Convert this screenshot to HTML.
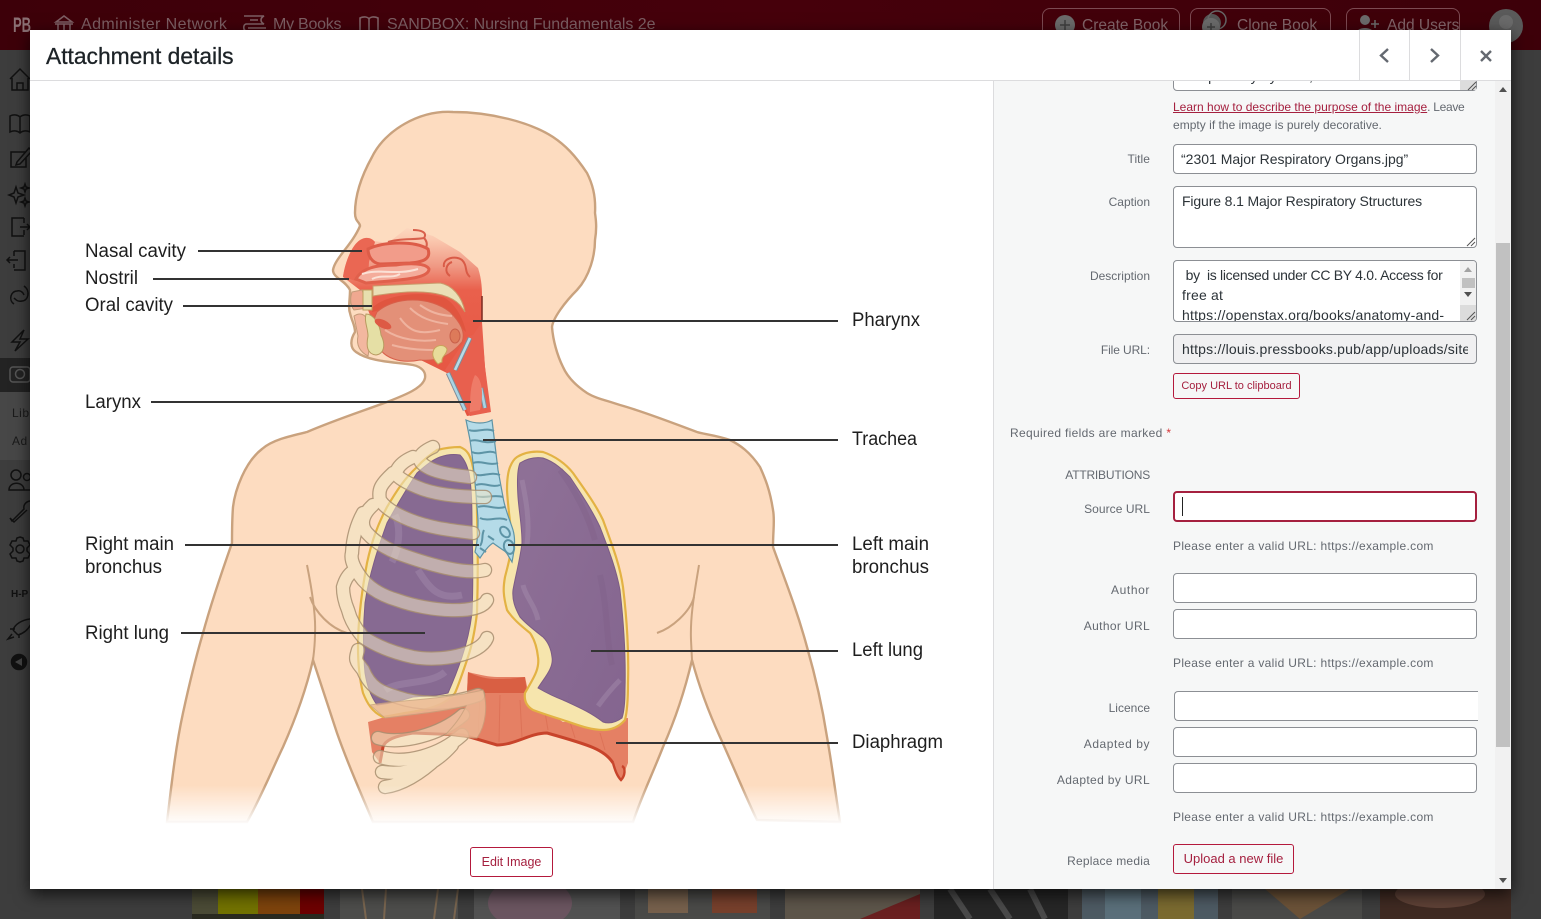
<!DOCTYPE html>
<html lang="en"><head><meta charset="utf-8"><title>Attachment details</title>
<style>
html,body{margin:0;padding:0;width:1541px;height:919px;overflow:hidden;background:#3f3f3f;font-family:"Liberation Sans",Arial,sans-serif}
*{box-sizing:border-box}
.a{position:absolute}
.t{position:absolute;white-space:nowrap;line-height:18px}
.lab{right:391px;text-align:right;font-size:12px;color:#646970;letter-spacing:.15px}
.inp{position:absolute;left:1173px;width:304px;background:#fff;border:1px solid #8c8f94;border-radius:4px;height:30px}
.val{font-size:14px;color:#2c3338;left:1181px}
.hint{font-size:12px;color:#646970;left:1173px;letter-spacing:.31px}
.btn{position:absolute;background:#f6f7f7;border:1px solid #b4193c;border-radius:3px;color:#a5203f;text-align:center;white-space:nowrap}
.hb{position:absolute;top:8px;height:42px;border:1px solid #7c4a52;border-radius:8px;color:#83656a;font-size:15.5px;line-height:33px;white-space:nowrap}
.nav{position:absolute;top:16px;color:#7d5f64;font-size:16px;white-space:nowrap}
</style></head><body>

<!-- dimmed page behind -->
<div class="a" style="left:0;top:0;width:1541px;height:50px;background:linear-gradient(90deg,#3d0009,#46000b 50%,#3d0009)"></div>
<div class="a" style="left:0;top:50px;width:1541px;height:869px;background:#3d3d3d"></div>
<div class="a" style="left:0;top:358px;width:30px;height:34px;background:#232323"></div>
<div class="a" style="left:0;top:392px;width:30px;height:68px;background:#474747"></div>
<div class="t" style="left:13px;top:16px;color:#8b7074;font:bold 21px/20px 'Liberation Sans',sans-serif;transform:scaleX(.62);transform-origin:left">PB</div>
<div class="nav" style="left:81px;letter-spacing:.42px">Administer Network</div>
<div class="nav" style="left:273px;letter-spacing:-.25px">My Books</div>
<div class="nav" style="left:387px;letter-spacing:-.06px">SANDBOX: Nursing Fundamentals 2e</div>
<svg class="a" style="left:0;top:0" width="700" height="30" fill="none" stroke="#7d5f64" stroke-width="1.6">
<path d="M55 24H73M56 22L64 16L72 22ZM58 24V30M64 24V30M70 24V30"/>
<path d="M244 16H264C260 18 260 22 264 24H246C243 25 243 30 246 31M250 20H258M266 28H248"/>
<path d="M360 30V18C364 16 368 17 369 19C370 17 374 16 378 18V30M369 19V30"/>
</svg>
<div class="hb" style="left:1042px;width:138px;padding-left:39px">Create Book</div>
<div class="hb" style="left:1190px;width:141px;padding-left:46px">Clone Book</div>
<div class="hb" style="left:1346px;width:114px;padding-left:40px">Add Users</div>
<svg class="a" style="left:1040px;top:0" width="501" height="50">
<circle cx="25" cy="25" r="10" fill="#6b6b6b"/><path d="M25 20V30M20 25H30" stroke="#3f3f3f" stroke-width="1.5"/>
<circle cx="172" cy="23" r="9" fill="#555"/><circle cx="177" cy="20" r="9" fill="none" stroke="#666" stroke-width="1.5"/><circle cx="171" cy="27" r="9" fill="#6b6b6b"/>
<path d="M171 23V31M167 27H175" stroke="#3f3f3f" stroke-width="1.5"/>
<circle cx="325" cy="20" r="5" fill="#6b6b6b"/><path d="M316 34C316 26 334 26 334 34Z" fill="#6b6b6b"/><path d="M335 20V28M331 24H339" stroke="#6b6b6b" stroke-width="1.5"/>
<circle cx="466" cy="26" r="17" fill="#5a5a5a"/><circle cx="466" cy="22" r="7" fill="#6a6a6a"/>
</svg>
<svg class="a" style="left:0;top:60px" width="30" height="620" fill="none" stroke="#111" stroke-width="1.5">
<path d="M10 19L20 9L30 19M12 18V30H28V18M17 30V23H23V30"/>
<path d="M10 56C14 54 18 55 20 57C22 55 26 54 30 56V72C26 70 22 71 20 73C18 71 14 70 10 72ZM20 57V73"/>
<path d="M26 92H11V107H26V98M17 102L29 88L32 91L20 104L16 105Z"/>
<path d="M16 127L18 133L24 135L18 137L16 143L14 137L9 135L14 133ZM25 124L26 127L29 128L26 129L25 132L24 129L21 128L24 127ZM25 138L26 141L29 142L26 143L25 146L24 143L21 142L24 141Z"/>
<path d="M24 158H12V176H24M20 167H30M27 164L30 167L27 170M24 163V158M24 175V170"/>
<path d="M14 191H25V210H14M7 200H18M10 197L7 200L10 203M14 196V191M14 208V204"/>
<path d="M14 244C8 240 11 231 17 231C20 230 23 232 24 235M24 226C31 231 28 241 22 241C18 242 16 240 14 238"/>
<path d="M24 270L12 282H20L15 291L28 279H20Z"/>
<rect x="10" y="307" width="20" height="15" rx="3" stroke="#555"/><circle cx="20" cy="314" r="4.5" stroke="#555"/>
<circle cx="16" cy="415" r="5"/><circle cx="27" cy="417" r="3.5"/><path d="M9 430C9 421 24 421 24 430ZM24 430H30"/>
<path d="M10 458L12 461L24 449C23 444 27 441 31 441M10 458L14 462L27 450"/>
<path d="M20 477l3 1 1 3 4 0 2 4-3 3 0 3 3 3-2 4-4 0-1 3-3 1-3-1-1-3-4 0-2-4 3-3 0-3-3-3 2-4 4 0 1-3Z"/><circle cx="20" cy="489" r="4"/>
<path d="M13 570C15 564 22 560 30 559M13 570L18 575M18 575C25 573 29 568 31 564M12 574L8 579L14 577M15 569L10 569M19 574L19 578"/>
<circle cx="19" cy="602" r="7.5" fill="#111"/><path d="M22 598L15 602L22 606Z" fill="#444" stroke="none"/>
</svg>
<div class="t" style="left:12px;top:404px;font-size:12px;color:#1a1a1a;letter-spacing:.5px">Lib</div>
<div class="t" style="left:12px;top:432px;font-size:12px;color:#1a1a1a;letter-spacing:.5px">Ad</div>
<div class="t" style="left:11px;top:586px;font-size:10px;font-weight:bold;color:#111">H-P</div>

<!-- thumbnails -->
<svg class="a" style="left:0;top:889px" width="1541" height="30">
<rect x="192" width="26" height="30" fill="#4b4b36"/><rect x="218" width="40" height="30" fill="#727200"/><rect x="258" width="42" height="30" fill="#7d430c"/><rect x="300" width="24" height="30" fill="#6d0000"/>
<rect x="192" y="25" width="132" height="5" fill="#2a2a20"/>
<rect x="340" width="118" height="30" fill="#4d4d4b"/><path d="M362 0L366 30M386 0L384 30M438 0L434 30M458 0L454 30" stroke="#7a6650" stroke-width="2"/>
<rect x="474" width="146" height="30" fill="#525252"/><ellipse cx="530" cy="14" rx="42" ry="26" fill="#6b5560"/>
<rect x="635" width="135" height="30" fill="#4a4a48"/><rect x="648" width="40" height="24" fill="#76604c"/><rect x="712" width="45" height="24" fill="#77402c"/>
<rect x="785" width="135" height="30" fill="#5d554a"/><path d="M860 30L920 5V30Z" fill="#6a2020"/>
<rect x="934" width="134" height="30" fill="#262626"/><path d="M950 0L970 30M990 0L1010 30M1030 0L1045 30" stroke="#4a4a4a" stroke-width="6"/>
<rect x="1082" width="136" height="30" fill="#4d5a63"/><rect x="1105" width="36" height="30" fill="#5a6f7a"/><rect x="1158" width="36" height="30" fill="#7a6a30"/>
<rect x="1232" width="130" height="30" fill="#4a4a48"/><path d="M1265 0H1350L1300 30Z" fill="#6b5238"/>
<rect x="1380" width="131" height="30" fill="#3f2a22"/><ellipse cx="1440" cy="5" rx="45" ry="14" fill="#5e4136"/>
</svg>

<!-- modal -->
<div class="a" style="left:30px;top:30px;width:1481px;height:859px;background:#fff;box-shadow:0 5px 15px rgba(0,0,0,.7);overflow:hidden">
  <div class="a" style="left:963px;top:50px;width:518px;height:809px;background:#f6f7f7;border-left:1px solid #dcdcde"></div>
</div>

<!-- illustration -->
<svg class="a" style="left:0;top:0" width="993" height="889" viewBox="0 0 993 889">
<defs>
<linearGradient id="nas" x1="0" y1="0" x2="0" y2="1"><stop offset="0" stop-color="#fcd8bf"/><stop offset=".06" stop-color="#fbc9b0"/><stop offset=".2" stop-color="#f09a85"/><stop offset=".33" stop-color="#e9604c"/><stop offset="1" stop-color="#e5533f"/></linearGradient>
<linearGradient id="fade" x1="0" y1="0" x2="0" y2="1"><stop offset="0" stop-color="#fff" stop-opacity="0"/><stop offset="1" stop-color="#fff"/></linearGradient>
<linearGradient id="lungL" x1="0" y1="0" x2="1" y2="1"><stop offset="0" stop-color="#8f7197"/><stop offset="1" stop-color="#84658f"/></linearGradient>
<g id="ribs" fill="none" stroke-linecap="round">
<path d="M470 477C450 475 435 472 427 467C418 462 415 455 433 447"/>
<path d="M485 497C460 497 435 495 417 487C405 482 392 475 397 470C400 464 406 460 413 457"/>
<path d="M473 533C450 530 430 528 410 520C395 514 385 508 380 500C378 490 380 485 393 473"/>
<path d="M485 570C465 575 430 565 397 553C385 548 375 542 367 533C360 525 362 515 373 505"/>
<path d="M487 600C480 615 430 612 397 600C380 595 370 588 363 580C355 570 350 560 352 553C353 535 358 522 363 513"/>
<path d="M487 638C480 655 440 662 413 657C390 652 375 645 363 637C355 628 350 618 348 610C343 598 343 590 343 587C345 580 348 575 352 572"/>
<path d="M478 695C450 705 420 705 397 697C380 692 370 687 363 670C355 660 355 660 358 650"/>
<path d="M463 715C440 735 400 745 378 738M462 735C440 755 405 765 380 757M452 745C430 770 405 775 382 772M440 755C420 775 400 785 385 787"/>
</g>
<mask id="ribm" maskUnits="userSpaceOnUse" x="300" y="420" width="220" height="400"><rect x="300" y="420" width="220" height="400" fill="#fff"/><use href="#ribs" stroke="#000" stroke-width="12"/></mask>
</defs>
<path d="M453 112C420 110 385 130 372 157C362 175 355 195 355 213C355 222 360 222 360 226C352 245 335 258 333 270C333 278 345 280 350 290C350 300 348 308 350 313C352 322 355 325 355 332C350 340 350 348 356 352C370 362 395 362 413 365C422 367 426 372 425 378C423 388 405 395 387 402C360 412 335 420 307 432C290 436 272 440 262 449C245 462 235 490 233 507C232 520 232 535 232 543C226 560 212 600 203 633C195 660 188 690 183 713C176 745 172 780 167 822L247 822C262 795 272 770 283 747C295 720 306 690 313 660L337 733C350 770 362 795 373 822L633 822C640 800 652 775 663 747C675 720 685 690 692 660C700 690 710 715 720 737C735 770 745 795 757 820L840 822C835 790 832 765 827 737C822 705 815 675 807 647C797 610 785 580 773 547C773 530 775 520 773 510C770 490 765 478 760 467C750 452 740 445 730 440C715 435 703 434 697 432C670 422 645 412 620 405C605 400 595 398 587 393C575 385 567 376 563 367C557 355 553 340 552 327C553 318 565 302 577 290C590 276 595 255 595 240C597 228 596 220 595 213C596 195 592 183 587 173C575 155 565 145 553 137C530 122 490 112 453 112Z" fill="#fddcc0" stroke="#c9a27e" stroke-width="2.4"/>
<g fill="none" stroke="#c9a27e" stroke-width="2"><path d="M307 565C312 590 316 615 315 633C315 645 314 652 313 660"/><path d="M310 597C315 612 330 628 347 633"/><path d="M699 565C695 590 690 615 691 640L692 660"/><path d="M657 633C672 628 690 612 694 597"/></g>

<!-- head organs -->
<path d="M343 277C345 262 352 245 360 240C366 236 372 238 374 241L388 243L407 228L433 236L460 252L478 268C482 280 482 290 482 300L482 330L485 367L490 412L467 416L447 373L380 340L360 290Z" fill="url(#nas)"/>
<path d="M343 277C345 262 352 245 360 240C366 236 372 238 375 242L369 262L368 279L356 281Z" fill="#ea6753"/>
<path d="M368 249C385 241 415 241 428 249C431 258 425 262 410 263L380 264C372 263 368 256 368 249Z" fill="#f29c8a" stroke="#dd5c48" stroke-width="3"/>
<path d="M356 279C362 268 376 265 396 265C410 263 426 263 429 269C429 277 410 279 390 281L366 283Z" fill="#f4ac9b" stroke="#e0604c" stroke-width="3"/>
<path d="M362 274C380 268 395 276 418 269M372 279C382 274 392 279 400 274" stroke="#fbe1d6" stroke-width="2" fill="none"/>
<path d="M388 242C400 238 415 240 424 238C428 232 420 230 413 230M426 248C428 243 426 240 424 238" stroke="#d8604c" stroke-width="2" fill="none"/>
<path d="M444 267C442 258 456 255 462 260C468 266 464 272 470 277M450 276C444 272 446 264 452 262" stroke="#d95b47" stroke-width="2" fill="none"/>
<path d="M373 286L440 283C452 285 462 296 465 312L460 305C448 292 420 288 373 296Z" fill="#eadfb6" stroke="#c99a6a"/>
<path d="M372 308C385 295 420 290 445 298C456 305 463 318 466 332L450 318C430 306 400 304 372 312Z" fill="#e0553f"/>
<path d="M377 312C395 296 430 296 450 312C460 322 466 332 462 342C452 354 440 362 420 360C400 364 383 358 378 345C372 332 372 322 377 312Z" fill="#e39078" stroke="#d8604a"/>
<path d="M400 318C410 332 420 335 440 330M410 308C420 318 432 322 448 324M420 305C430 312 438 315 452 316M392 345C410 350 425 350 440 350M385 330C400 340 420 342 436 340" stroke="#efb39f" stroke-width="2" fill="none"/>
<path d="M352 292L362 290L368 308L354 310C350 305 350 298 352 292Z" fill="#f0a890" stroke="#c49a78"/>
<rect x="363" y="290" width="9" height="20" fill="#e7dfae" stroke="#c0a060"/>
<path d="M354 316C360 312 366 314 368 322C372 335 370 345 368 356C360 352 356 345 358 336Z" fill="#f3b79f" stroke="#c49a78"/>
<path d="M366 314C374 314 380 325 381 335C386 345 384 354 376 355C367 354 366 346 368 336C368 328 364 322 366 314Z" fill="#e5dfa5" stroke="#b89a60"/>
<ellipse cx="383" cy="324" rx="9" ry="4" transform="rotate(25 383 324)" fill="#dd5a45"/>
<path d="M433 352C434 345 444 343 447 349C447 355 441 356 442 362L438 364C434 360 432 356 433 352Z" fill="#e8dc9a" stroke="#c9a35b"/>
<ellipse cx="455" cy="336" rx="5" ry="7" fill="#dd7a5a" stroke="#c9604a"/>
<path d="M445 370L467 337L473 335L482 322L485 367L491 412L470 416Z" fill="#e8604e"/>
<path d="M448 373L465 410" stroke="#7e8b98" stroke-width="4.5"/><path d="M448 373L465 410" stroke="#a9d4e4" stroke-width="2.6"/>
<path d="M455 370L470 338" stroke="#7e8b98" stroke-width="4.5"/><path d="M455 370L470 338" stroke="#b7dbe8" stroke-width="2.6"/>
<path d="M481 388L485 408" stroke="#7e8b98" stroke-width="4.5"/><path d="M481 388L485 408" stroke="#a9d4e4" stroke-width="2.6"/>
<path d="M475 375C482 378 484 395 480 410L470 412C470 400 470 385 475 375Z" fill="#ee7b68"/>
<path d="M482 296V322" stroke="#7a2a20" stroke-width="1.5"/>

<!-- diaphragm -->
<path d="M468 672C480 675 490 677 497 677L525 677L530 700L563 722L628 718L628 763L621 781L613 763C605 750 590 745 547 733C530 733 515 745 497 745L463 735L413 733C395 736 385 740 383 747L380 763L372 752L368 722L467 693Z" fill="#e58064"/>
<path d="M468 672C480 678 490 679 497 679C510 679 518 678 525 677L527 693L467 693Z" fill="#d95f43"/>
<path d="M613 763C605 750 590 745 547 733C530 733 515 745 497 745L463 735L413 733C395 736 385 740 383 747L380 763" fill="none" stroke="#c8442b" stroke-width="3"/>
<path d="M622 766C626 768 625 776 621 780C617 776 615 770 613 763" stroke="#c8442b" stroke-width="2.4" fill="none"/>
<path d="M480 695L478 735M500 695L499 742M520 700L522 738M545 712L548 730M570 722L575 738M600 733L605 750" stroke="#d86a50" stroke-width="1" opacity=".6"/>

<!-- lungs -->
<path d="M517 457C525 452 535 451 543 452C555 456 566 464 573 473C585 490 596 505 603 520C612 545 620 565 623 587C627 620 629 650 628 683C628 700 627 712 625 720C618 728 610 730 603 730C590 730 578 725 563 720C550 716 541 713 533 710C526 706 524 700 525 693C532 680 540 670 538 657C537 648 535 640 530 633C520 625 512 618 507 610C503 595 503 588 505 577C508 565 511 555 512 543C511 525 508 510 507 490C507 480 508 472 510 467C512 462 514 459 517 457Z" fill="#f6e5ad" stroke="#e3b244" stroke-width="2.2"/>
<path d="M520 463C528 458 536 457 543 458C555 462 563 470 570 477C582 495 592 510 600 527C608 548 616 568 620 590C624 625 626 655 625 690C625 702 624 712 622 718C615 723 609 724 603 722C590 712 578 707 563 700C552 696 545 692 538 688C544 678 554 668 552 657C551 648 548 642 543 637C534 630 526 624 520 617C515 608 512 600 513 590C515 578 520 560 522 543C522 525 519 512 518 497C517 482 517 470 520 463Z" fill="url(#lungL)" stroke="#7c5c86"/>
<path d="M522 480C526 500 530 520 527 545M523 585C525 596 535 605 538 620M598 706C606 695 612 688 620 680" stroke="#a68fae" stroke-width="5" fill="none" opacity=".45"/>
<path d="M560 470C575 490 588 515 595 540M600 575C608 610 606 640 612 665" stroke="#7e5f88" stroke-width="6" fill="none" opacity=".35"/>

<path d="M437 450C445 448 452 447 460 447C468 450 470 456 472 463C476 480 477 495 477 513C478 545 478 580 477 613C475 630 472 645 468 657C463 672 459 684 455 693C445 706 425 710 405 713C395 715 389 716 383 717C372 712 367 703 363 693C359 677 358 662 358 647C358 620 362 590 367 563C372 540 378 524 387 507C397 490 405 478 417 467C423 460 430 455 437 450Z" fill="#f6e5ad" stroke="#e3b244" stroke-width="2.2"/>
<path d="M440 457C448 454 454 454 460 455C465 460 467 466 469 473C472 490 472 510 472 530C473 560 473 590 472 613C470 630 466 645 462 657C457 672 452 684 448 693C436 696 425 696 413 697C400 701 388 704 377 705C370 695 367 685 365 673C363 652 363 628 365 603C369 575 378 548 387 523C397 505 407 488 417 473C425 466 432 460 440 457Z" fill="#876a92" stroke="#7c5c86"/>
<path d="M395 515C402 530 398 550 392 562M418 570C430 590 440 600 462 595M385 690C400 680 430 685 445 672" stroke="#a890b2" stroke-width="7" fill="none" opacity=".4"/>

<!-- trachea -->
<path d="M466 420C475 424 485 424 492 420L495 445L498 470L503 497C505 510 510 520 513 530C516 540 514 552 512 562L506 552C500 548 497 546 493 543C488 546 484 552 480 558L475 552C478 540 478 530 478 520C476 490 473 460 470 440Z" fill="#b5dbe8" stroke="#5e94a6" stroke-width="1.2"/>
<g fill="none" stroke="#5e94a6" stroke-width="2">
<path d="M469 430C476 433 486 427 494 431M470 441C478 438 484 445 496 441M472 452C480 456 488 449 496 453M473 463C480 460 490 466 498 463M474 474C482 478 490 471 500 475M476 485C484 482 492 488 500 485M476 496C484 499 494 494 503 497M478 507C486 504 496 510 505 507M480 518C488 522 498 516 507 520"/>
<ellipse cx="505" cy="532" rx="6" ry="4" transform="rotate(50 505 532)"/>
<ellipse cx="509" cy="547" rx="5" ry="7" transform="rotate(-15 509 547)"/>
<path d="M484 530C481 536 484 540 480 546M480 548L486 552M488 536L494 540"/>
</g>

<!-- ribs -->
<use href="#ribs" stroke="#f1e7c6" stroke-width="13" opacity=".55"/>
<g mask="url(#ribm)"><use href="#ribs" stroke="#a88f70" stroke-width="14.5" opacity=".85"/></g>
<path d="M370 705C400 700 440 700 483 690C488 705 486 725 477 738C465 738 452 735 445 735C455 725 462 715 466 706C440 712 410 715 385 718Z" fill="#ecb995" opacity=".82" stroke="#c9a27e"/>

<rect x="150" y="785" width="710" height="40" fill="url(#fade)"/>

<!-- leader lines -->
<g stroke="#333" stroke-width="2">
<path d="M198 251H362M153 279H349M183 306H372M473 321H838M151 402H471M483 440H838M185 545H479M508 545H838M181 633H425M591 651H838M616 743H838"/>
</g>
<g font-family="'Liberation Sans',Arial,sans-serif" font-size="19" fill="#1e1e1e">
<text x="85" y="257" textLength="101" lengthAdjust="spacingAndGlyphs">Nasal cavity</text>
<text x="85" y="284" textLength="53" lengthAdjust="spacingAndGlyphs">Nostril</text>
<text x="85" y="311" textLength="88" lengthAdjust="spacingAndGlyphs">Oral cavity</text>
<text x="85" y="408" textLength="56" lengthAdjust="spacingAndGlyphs">Larynx</text>
<text x="85" y="550" textLength="89" lengthAdjust="spacingAndGlyphs">Right main</text>
<text x="85" y="573" textLength="77" lengthAdjust="spacingAndGlyphs">bronchus</text>
<text x="85" y="639" textLength="84" lengthAdjust="spacingAndGlyphs">Right lung</text>
<text x="852" y="326" textLength="68" lengthAdjust="spacingAndGlyphs">Pharynx</text>
<text x="852" y="445" textLength="65" lengthAdjust="spacingAndGlyphs">Trachea</text>
<text x="852" y="550" textLength="77" lengthAdjust="spacingAndGlyphs">Left main</text>
<text x="852" y="573" textLength="77" lengthAdjust="spacingAndGlyphs">bronchus</text>
<text x="852" y="656" textLength="71" lengthAdjust="spacingAndGlyphs">Left lung</text>
<text x="852" y="748" textLength="91" lengthAdjust="spacingAndGlyphs">Diaphragm</text>
</g>
</svg>

<div class="btn" style="left:470px;top:847px;width:83px;height:30px;font-size:12.5px;line-height:29px;background:#fff">Edit Image</div>

<!-- right panel -->
<div class="a" style="left:1173px;top:60px;width:304px;height:31px;background:#fff;border:1px solid #8c8f94;border-radius:0 0 4px 4px"></div>
<div class="t val" style="top:67px;left:1182px;letter-spacing:.4px">Respiratory system,</div>
<div class="a" style="left:1460px;top:81px;width:16px;height:9px;background:#dcdcdc"></div>
<svg class="a" style="left:1466px;top:81px" width="11" height="10" stroke="#555"><path d="M2 9L10 1M6 9L10 5"/></svg>

<div class="t" style="left:1173px;top:98px;font-size:12px;color:#646970"><span style="color:#a5203f;text-decoration:underline;letter-spacing:0">Learn how to describe the purpose of the image</span><span style="letter-spacing:-.3px">. Leave</span></div>
<div class="t" style="left:1173px;top:116px;font-size:12px;color:#646970;letter-spacing:.02px">empty if the image is purely decorative.</div>

<div class="t lab" style="top:150px;letter-spacing:.05px">Title</div>
<div class="inp" style="top:144px"></div>
<div class="t val" style="top:150px">“2301 Major Respiratory Organs.jpg”</div>

<div class="t lab" style="top:193px;letter-spacing:0">Caption</div>
<div class="inp" style="top:186px;height:62px"></div>
<div class="t val" style="top:192px;left:1182px;letter-spacing:-.13px">Figure 8.1 Major Respiratory Structures</div>
<svg class="a" style="left:1466px;top:237px" width="10" height="10" stroke="#555"><path d="M1 9L9 1M5 9L9 5"/></svg>

<div class="t lab" style="top:267px;letter-spacing:0">Description</div>
<div class="inp" style="top:260px;height:62px;overflow:hidden">
  <div class="t val" style="left:8px;top:4px;line-height:20px;white-space:pre;letter-spacing:.2px"><span style="letter-spacing:-.3px"> by  is licensed under CC BY 4.0. Access for</span>
free at
https://openstax.org/books/anatomy-and-</div>
  <div class="a" style="left:286px;top:0;width:17px;height:60px;background:#f1f1f1"></div>
  <div class="a" style="left:286px;top:44px;width:17px;height:17px;background:#dcdcdc"></div>
  <div class="a" style="left:288px;top:17px;width:13px;height:10px;background:#c1c1c1"></div>
</div>
<svg class="a" style="left:1460px;top:261px" width="17" height="60">
<path d="M8 6L12 11H4Z" fill="#a3a3a3"/><path d="M4 31H12L8 36Z" fill="#505050"/><path d="M7 59L15 51M11 59L15 55" stroke="#555" fill="none"/></svg>

<div class="t lab" style="top:341px;letter-spacing:-.1px">File URL:</div>
<div class="inp" style="top:334px;background:#f0f0f1;overflow:hidden"><div class="t val" style="left:8px;top:5px;width:286px;overflow:hidden;letter-spacing:.2px">https://louis.pressbooks.pub/app/uploads/sites/</div></div>
<div class="btn" style="left:1173px;top:373px;width:127px;height:26px;font-size:11px;line-height:24px">Copy URL to clipboard</div>

<div class="t" style="left:1010px;top:424px;font-size:12px;color:#646970;letter-spacing:.33px">Required fields are marked <span style="color:#d63638">*</span></div>
<div class="t lab" style="top:466px;letter-spacing:-.2px">ATTRIBUTIONS</div>

<div class="t lab" style="top:500px;letter-spacing:.05px">Source URL</div>
<div class="inp" style="top:491px;height:31px;border:2px solid #a5203f"></div>
<div class="a" style="left:1182px;top:497px;width:1px;height:19px;background:#222"></div>
<div class="t hint" style="top:537px">Please enter a valid URL: https://example.com</div>

<div class="t lab" style="top:581px;letter-spacing:.6px">Author</div>
<div class="inp" style="top:573px"></div>
<div class="t lab" style="top:617px;letter-spacing:.35px">Author URL</div>
<div class="inp" style="top:609px"></div>
<div class="t hint" style="top:654px">Please enter a valid URL: https://example.com</div>

<div class="t lab" style="top:699px;letter-spacing:0">Licence</div>
<div class="inp" style="top:691px;left:1174px;border-right:none;border-radius:4px 0 0 4px"></div>
<div class="t lab" style="top:735px;letter-spacing:.55px">Adapted by</div>
<div class="inp" style="top:727px"></div>
<div class="t lab" style="top:771px;letter-spacing:.36px">Adapted by URL</div>
<div class="inp" style="top:763px"></div>
<div class="t hint" style="top:808px">Please enter a valid URL: https://example.com</div>

<div class="t lab" style="top:852px;letter-spacing:.22px">Replace media</div>
<div class="btn" style="left:1173px;top:844px;width:121px;height:30px;font-size:13px;line-height:28px">Upload a new file</div>

<!-- panel scrollbar -->
<div class="a" style="left:1495px;top:81px;width:16px;height:808px;background:#f1f1f1"></div>
<div class="a" style="left:1496px;top:243px;width:14px;height:504px;background:#c1c1c1"></div>
<svg class="a" style="left:1495px;top:81px" width="16" height="808"><path d="M8 6L12 11H4Z" fill="#505050"/><path d="M4 797H12L8 802Z" fill="#505050"/></svg>

<!-- modal header -->
<div class="a" style="left:30px;top:30px;width:1481px;height:51px;background:#fff;border-bottom:1px solid #dcdcde"></div>
<div class="t" style="left:46px;top:42px;font-size:22.8px;line-height:28px;color:#1d2327;-webkit-text-stroke:.3px #1d2327">Attachment details</div>
<div class="a" style="left:1359px;top:30px;width:1px;height:50px;background:#dcdcde"></div>
<div class="a" style="left:1409px;top:30px;width:1px;height:50px;background:#dcdcde"></div>
<div class="a" style="left:1460px;top:30px;width:1px;height:50px;background:#dcdcde"></div>
<svg class="a" style="left:1360px;top:31px" width="151" height="49" fill="none" stroke="#646970" stroke-width="2.4">
<path d="M28 18L21 24.5L28 31"/><path d="M71 18L78 24.5L71 31"/><path d="M121 20L131 30M131 20L121 30"/>
</svg>
</body></html>
